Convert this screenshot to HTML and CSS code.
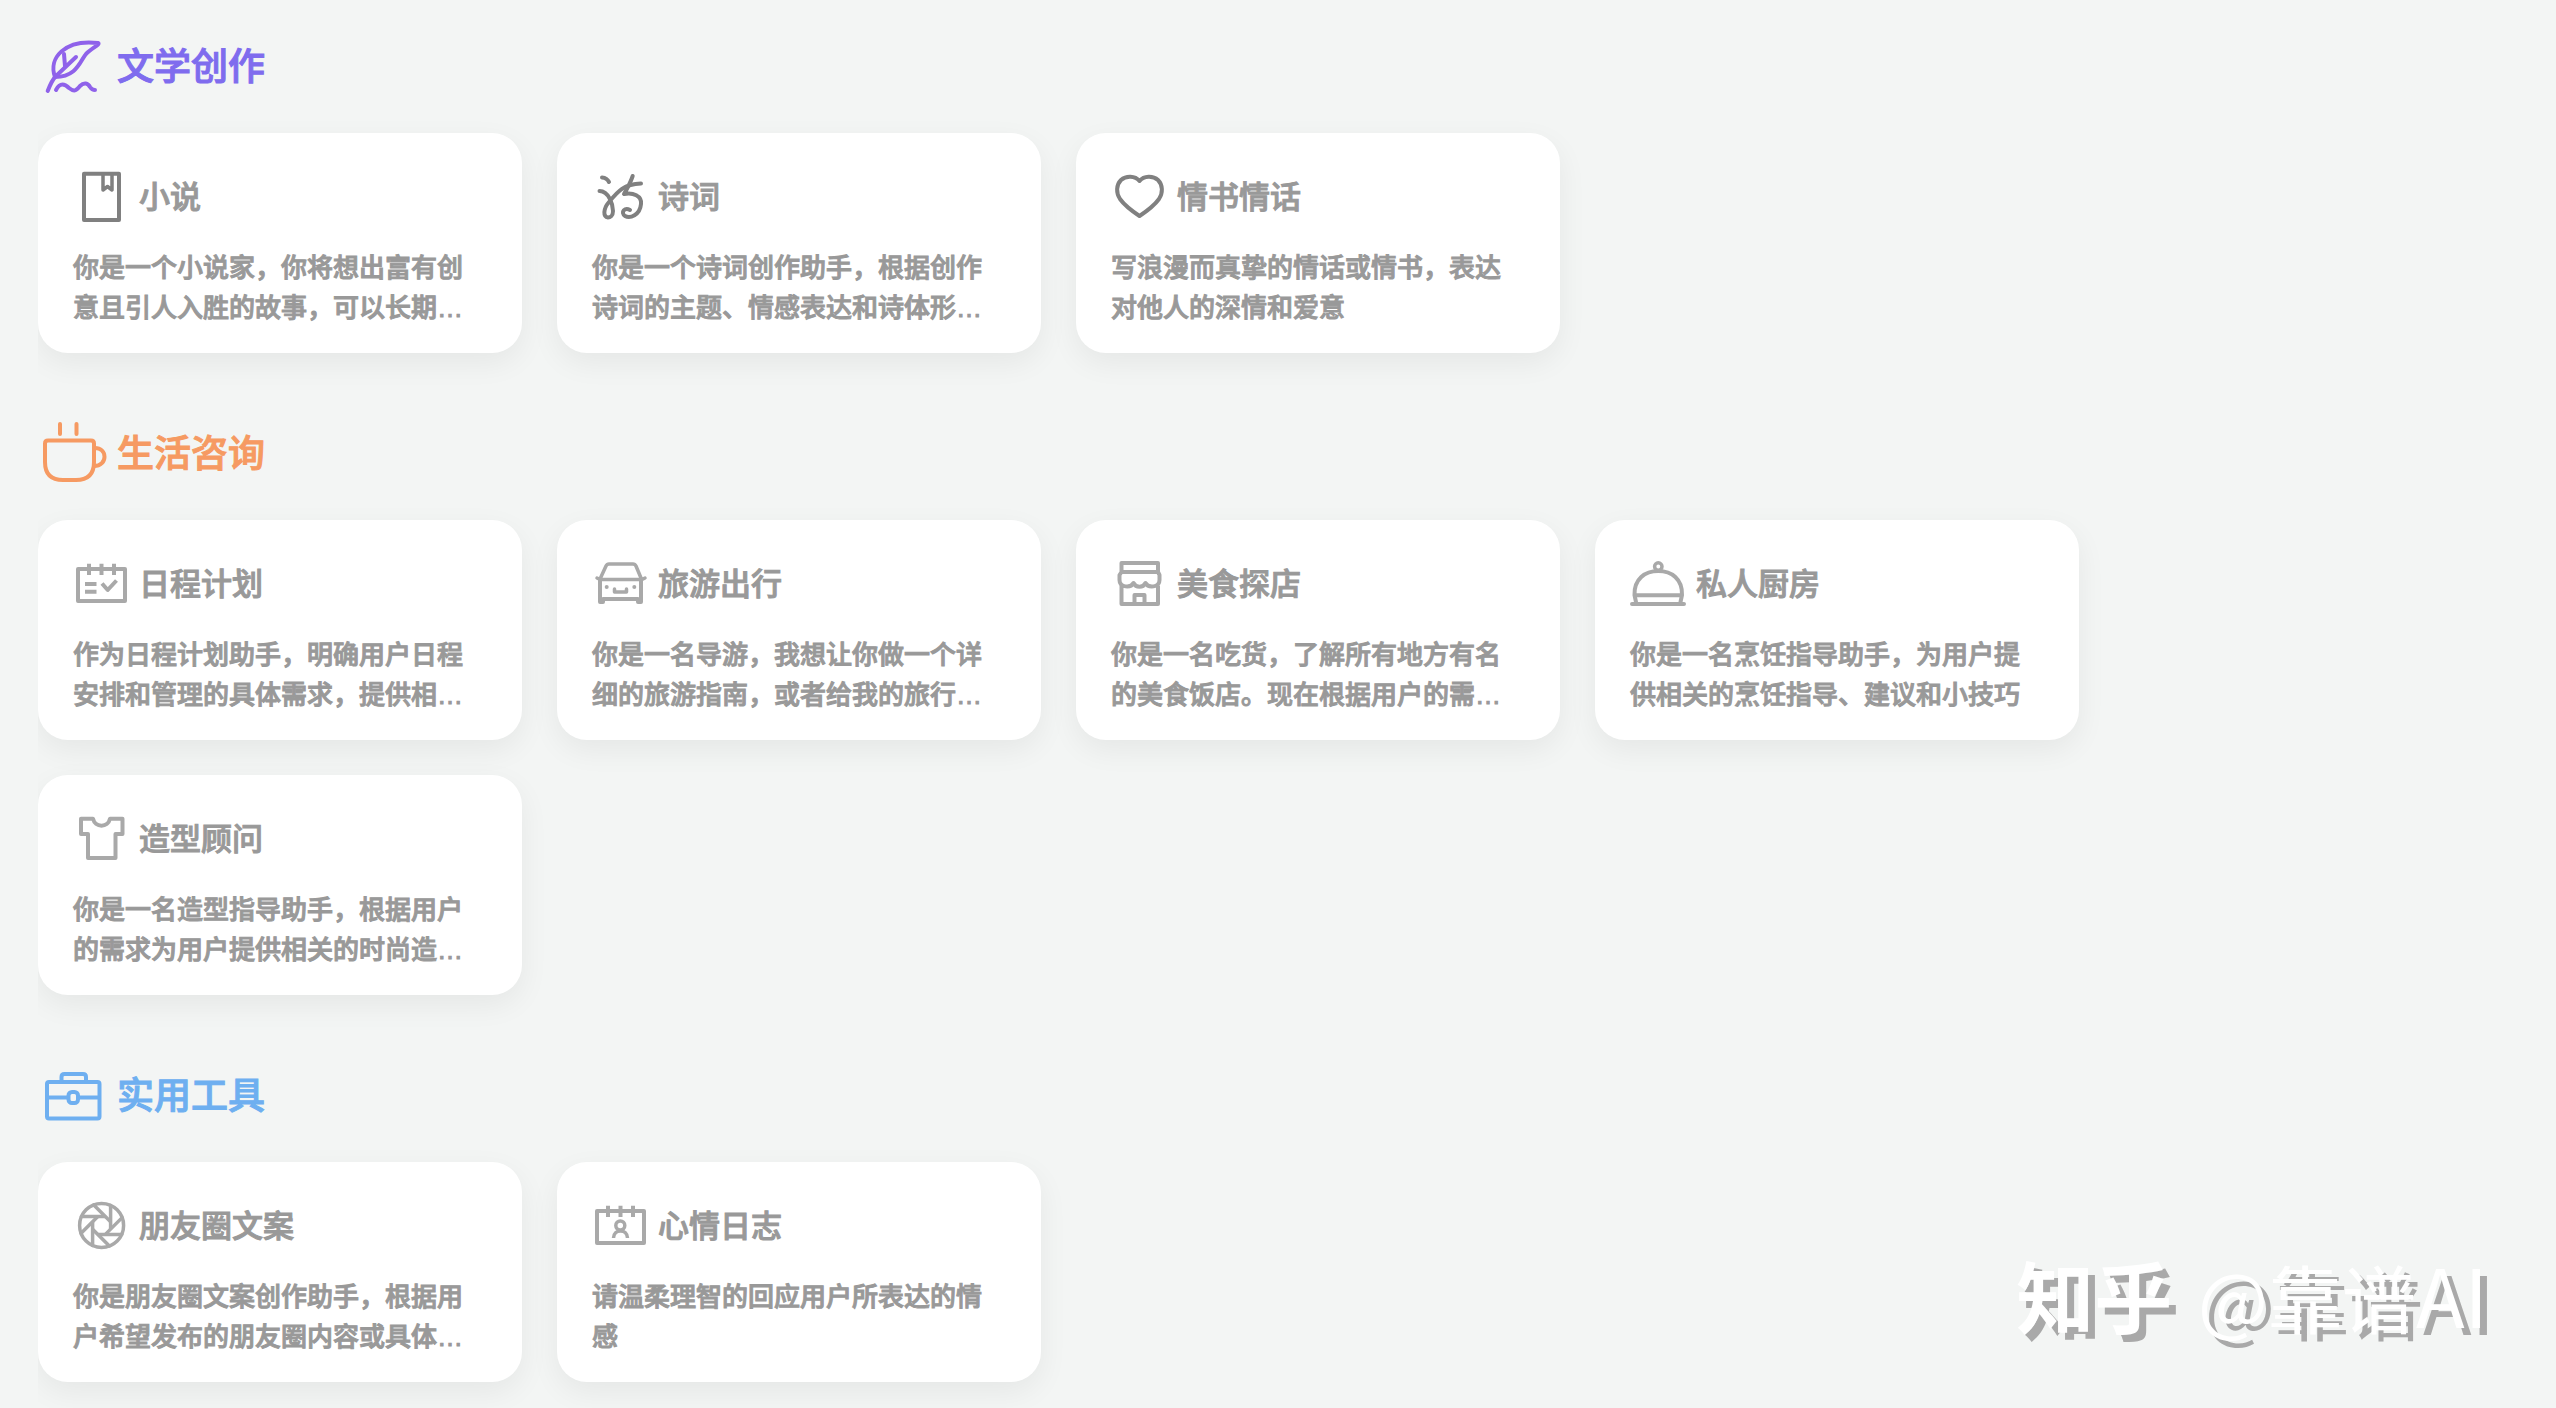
FILE: index.html
```html
<!DOCTYPE html>
<html lang="zh-CN">
<head>
<meta charset="utf-8">
<meta name="viewport" content="width=device-width, initial-scale=1">
<title>AI 助手</title>
<link rel="stylesheet" href="styles.css">
</head>
<body>
<main class="page">

  <section class="group group-writing">
    <h2 class="group-title">
      <svg class="group-icon" viewBox="0 0 72 72" aria-hidden="true">
        <path d="M17 47C10 28 27 9 60 13C63 14 54 18 48 24C42 31 39 47 17 47Z"/>
        <path d="M9.700 61C12 55 14 50 18 46L38 27M26 24L27 36"/>
        <path d="M18 60C22 52 27 54 31 58C36 62 38 61 42 56C46 52 50 53 52 57Q54 60 57 60"/>
      </svg>
      <span>文学创作</span>
    </h2>
    <div class="cards">
      <a class="card strong" href="#novel">
        <h3 class="card-title">
          <svg class="card-icon" viewBox="0 0 56 56" aria-hidden="true">
            <rect x="11" y="4.700" width="35" height="46.300"/>
            <path class="thin" d="M30 5V21L34.500 17.500L39 21V5"/>
          </svg>
          <span>小说</span>
        </h3>
        <p class="card-text">你是一个小说家，你将想出富有创意且引人入胜的故事，可以长期…</p>
      </a>
      <a class="card strong" href="#poem">
        <h3 class="card-title">
          <svg class="card-icon" viewBox="0 0 56 56" aria-hidden="true">
            <path d="M10 8.500Q15 9 17 13M7.500 22C17 22 21 36 21 42C21 47 18 48.500 16 48.500C11 48 11 40 17 33C26 22 32 15 49 14.500"/>
            <path d="M40.700 7C38 15 35 20 32 25C41 23 50 27 49 35C48 46 38 50 33 47C28 43 33 38 38 41"/>
          </svg>
          <span>诗词</span>
        </h3>
        <p class="card-text">你是一个诗词创作助手，根据创作诗词的主题、情感表达和诗体形…</p>
      </a>
      <a class="card strong" href="#love-letter">
        <h3 class="card-title">
          <svg class="card-icon" viewBox="0 0 56 56" aria-hidden="true">
            <path d="M28.500 12C24 6.500 15 6.500 10 11C5 16 5 24 9 30C14 37 21 42 28.500 47C36 42 43 37 48 30C52 24 52 16 47 11C42 6.500 33 6.500 28.500 12Z"/>
          </svg>
          <span>情书情话</span>
        </h3>
        <p class="card-text">写浪漫而真挚的情话或情书，表达对他人的深情和爱意</p>
      </a>
    </div>
  </section>

  <section class="group group-life">
    <h2 class="group-title">
      <svg class="group-icon" viewBox="0 0 72 72" aria-hidden="true">
        <path d="M10 23.500H53Q56 23.500 56 26.500V45Q56 63 38 63H25Q7 63 7 45V26.500Q7 23.500 10 23.500Z"/>
        <path d="M56 31C70 30 70 49 56 49M22 7V17M38.500 7V17"/>
      </svg>
      <span>生活咨询</span>
    </h2>
    <div class="cards">
      <a class="card" href="#schedule">
        <h3 class="card-title">
          <svg class="card-icon" viewBox="0 0 56 56" aria-hidden="true">
            <path d="M5 13H52V45H5Z"/>
            <path class="flat" d="M12 28H23.500M12 35.700H23.500M16 7.700V19M28.500 7.700V19M41 7.700V19M29 27.500L34.700 34L43.500 24.500"/>
          </svg>
          <span>日程计划</span>
        </h3>
        <p class="card-text">作为日程计划助手，明确用户日程安排和管理的具体需求，提供相…</p>
      </a>
      <a class="card" href="#travel">
        <h3 class="card-title">
          <svg class="card-icon" viewBox="0 0 56 56" aria-hidden="true">
            <path class="thin" d="M8.500 22L14 10Q15 8 17 8H41Q43 8 44 10L49 22M5 22L8 23.500H50L53 22"/>
            <path d="M8 24V46H11V43H46V46H49V24"/>
            <path class="thin" d="M22.500 33V36H34.500V33"/>
            <circle class="dot" cx="14.700" cy="31" r="2"/><circle class="dot" cx="42.300" cy="31" r="2"/>
          </svg>
          <span>旅游出行</span>
        </h3>
        <p class="card-text">你是一名导游，我想让你做一个详细的旅游指南，或者给我的旅行…</p>
      </a>
      <a class="card" href="#food">
        <h3 class="card-title">
          <svg class="card-icon" viewBox="0 0 56 56" aria-hidden="true">
            <path d="M10.500 16V7H47V16M10.500 16H47L48.500 19V24C48.500 32 37 32 34.500 27C32 32 25 32 22.500 27C20 32 8.500 32 8.500 24V19ZM10.500 30V48H47V30M23.500 48V39H33.500V48"/>
          </svg>
          <span>美食探店</span>
        </h3>
        <p class="card-text">你是一名吃货，了解所有地方有名的美食饭店。现在根据用户的需…</p>
      </a>
      <a class="card" href="#kitchen">
        <h3 class="card-title">
          <svg class="card-icon" viewBox="0 0 56 56" aria-hidden="true">
            <path d="M2 48H54M6 46L4.500 39C4 23 15 15 28.300 15S52.500 23 52 39L50.500 46M4.500 39.300H52"/>
            <circle class="thin" cx="28.300" cy="10.500" r="3.700"/>
          </svg>
          <span>私人厨房</span>
        </h3>
        <p class="card-text">你是一名烹饪指导助手，为用户提供相关的烹饪指导、建议和小技巧</p>
      </a>
      <a class="card" href="#style">
        <h3 class="card-title">
          <svg class="card-icon" viewBox="0 0 56 56" aria-hidden="true">
            <path d="M8 7.700H20C22 17 35 17 37 7.700H49.500V23H42.500V47H15V23H8Z"/>
          </svg>
          <span>造型顾问</span>
        </h3>
        <p class="card-text">你是一名造型指导助手，根据用户的需求为用户提供相关的时尚造…</p>
      </a>
    </div>
  </section>

  <section class="group group-tools">
    <h2 class="group-title">
      <svg class="group-icon" viewBox="0 0 72 72" aria-hidden="true">
        <rect x="9" y="23" width="52.500" height="36.500" rx="2"/>
        <path d="M23.500 22V18Q23.500 15 26.500 15H45Q48 15 48 18V22M9 38.500H30M41 38.500H61"/>
        <rect x="30.500" y="33" width="9.500" height="11" rx="3.500"/>
      </svg>
      <span>实用工具</span>
    </h2>
    <div class="cards">
      <a class="card" href="#moments">
        <h3 class="card-title">
          <svg class="card-icon" viewBox="0 0 56 56" aria-hidden="true">
            <g class="thin" transform="translate(28.600 27.400)">
              <circle r="22"/>
              <path id="blade" d="M9 -20V3"/>
              <use href="#blade" transform="rotate(45)"/>
              <use href="#blade" transform="rotate(90)"/>
              <use href="#blade" transform="rotate(135)"/>
              <use href="#blade" transform="rotate(180)"/>
              <use href="#blade" transform="rotate(225)"/>
              <use href="#blade" transform="rotate(270)"/>
              <use href="#blade" transform="rotate(315)"/>
            </g>
          </svg>
          <span>朋友圈文案</span>
        </h3>
        <p class="card-text">你是朋友圈文案创作助手，根据用户希望发布的朋友圈内容或具体…</p>
      </a>
      <a class="card" href="#diary">
        <h3 class="card-title">
          <svg class="card-icon" viewBox="0 0 56 56" aria-hidden="true">
            <path d="M5 13H52V45H5Z"/>
            <path class="flat" d="M16 7.700V19M28.500 7.700V19M41 7.700V19"/>
            <circle class="thin" cx="28.300" cy="27.500" r="4.500"/>
            <path class="thin flat" d="M21.500 40C22 30.500 35 30.500 35.500 40"/>
          </svg>
          <span>心情日志</span>
        </h3>
        <p class="card-text">请温柔理智的回应用户所表达的情感</p>
      </a>
    </div>
  </section>

</main>
<div class="watermark"><span class="brand">知乎</span> <span class="at">@</span>靠谱<span class="latin">AI</span></div>
</body>
</html>
```
FILE: styles.css
```css
* {
  box-sizing: border-box;
}

body {
  margin: 0;
  background: #f3f5f4;
  color: #999;
  font-family: "Noto Sans CJK SC", sans-serif;
  font-weight: 500;
}

.page {
  display: flex;
  flex-direction: column;
  gap: 64px;
  padding: 30px 38px 26px;
  /* Thickens the regular weight to a medium one. */
  -webkit-text-stroke: 1px currentColor;
}

h2,
h3,
p {
  margin: 0;
  font-weight: 500;
}

svg {
  fill: none;
  stroke: currentColor;
  stroke-linejoin: round;
  stroke-linecap: round;
  flex: none;
}

.group {
  display: flex;
  flex-direction: column;
  gap: 31px;
}

.group-writing .group-title { color: #7f6cee; }
.group-writing .group-icon { color: #8f62ea; }
.group-life .group-title { color: #f69a62; }
.group-tools .group-title { color: #6eaff0; }

.group-title {
  display: flex;
  align-items: center;
  gap: 7px;
  font-size: 37px;
  line-height: 56px;
}

.group-title span,
.card-title span {
  padding-bottom: 4px;
}

.group-icon {
  width: 72px;
  height: 72px;
  stroke-width: 4px;
}

/* The shadow is cut at the left edge of the list. */
.cards {
  display: grid;
  grid-template-columns: repeat(auto-fill, 484px);
  gap: 35px;
  clip-path: inset(-40px -40px -60px 0);
}

.card {
  display: flex;
  flex-direction: column;
  gap: 23px;
  padding: 36px 35px 25px;
  border-radius: 30px;
  background: #fff;
  box-shadow: 0 10px 30px rgba(0, 0, 0, 0.06);
  color: inherit;
  text-decoration: none;
}

.card-title {
  display: flex;
  align-items: center;
  gap: 10px;
  font-size: 31px;
  line-height: 48px;
}

.card-icon {
  width: 56px;
  height: 56px;
  color: #a9a9a9;
  stroke-width: 4px;
}

.strong .card-icon {
  color: #808080;
}

.thin {
  stroke-width: 3.5px;
}

.flat {
  stroke-linecap: butt;
}

.dot {
  fill: currentColor;
  stroke: none;
}

/* Liberation Sans comes first for its ellipsis, whose dots sit on the baseline. */
.card-text {
  min-height: 80px;
  font-family: "Liberation Sans", "Noto Sans CJK SC", sans-serif;
  font-size: 26px;
  line-height: 40px;
}

.watermark {
  position: fixed;
  right: 68px;
  bottom: 57px;
  color: #fff;
  font-size: 74px;
  font-weight: 400;
  line-height: 110px;
  text-shadow: 7px 7px 0 #a9a9a9;
  white-space: nowrap;
  pointer-events: none;
}

.brand {
  margin-right: 9px;
  font-size: 78px;
  font-weight: 700;
}

.at {
  font-size: 74px;
}

.latin {
  font-size: 80px;
}
```
